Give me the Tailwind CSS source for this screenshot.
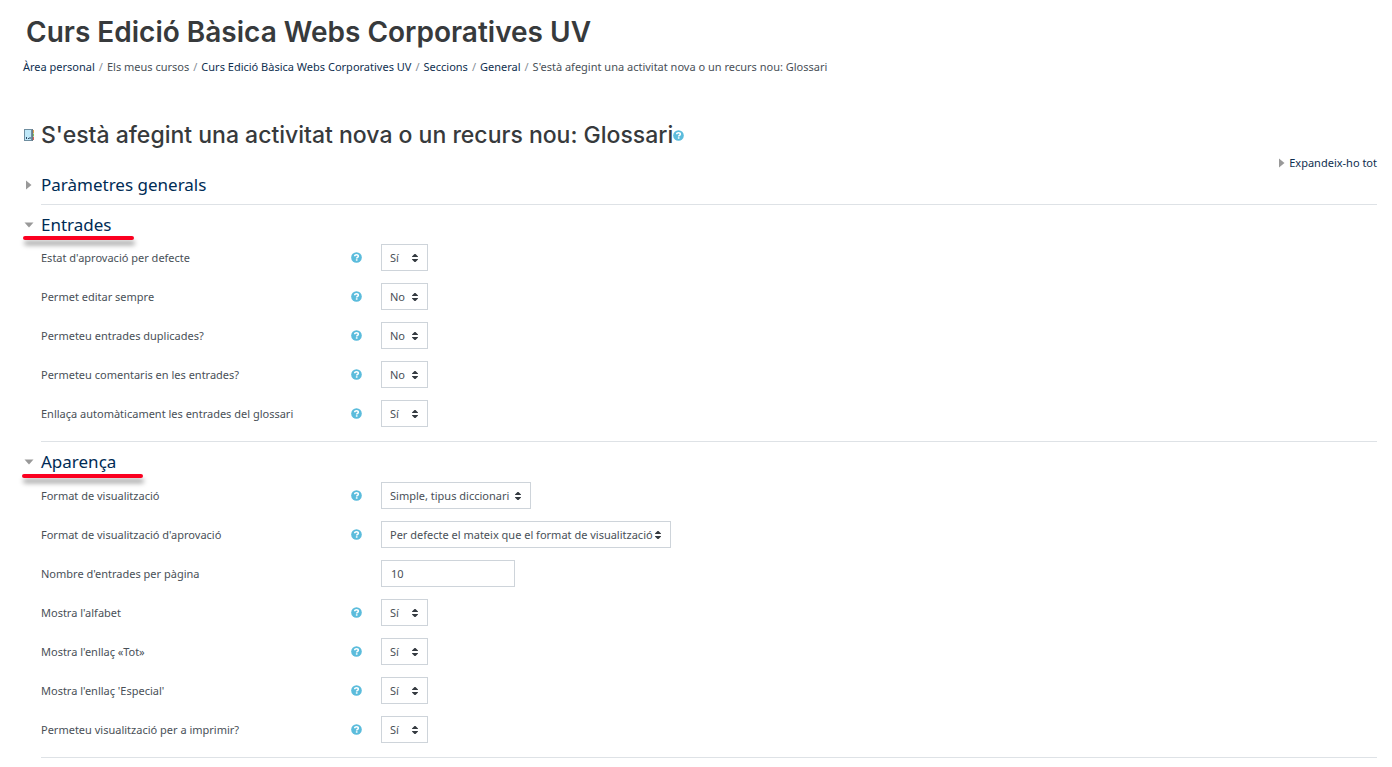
<!DOCTYPE html>
<html lang="ca">
<head>
  <meta charset="UTF-8">
  <meta name="viewport" content="width=device-width, initial-scale=1.0">
  <title>Curs Edició Bàsica Webs Corporatives UV</title>
  <script src="https://cdn.jsdelivr.net/npm/@tailwindcss/browser@4"></script>
</head>
<body class="bg-white text-[#495057] text-[11px] leading-4 font-['Noto_Sans',sans-serif]">
  <!-- Shared icons -->
  <svg class="hidden">
    <symbol id="help" viewBox="0 0 12 12">
      <circle cx="6" cy="6" r="5.800" fill="#5bbcdc"/>
      <path d="M4 4.700C4 3.400 4.900 2.900 6 2.900s2 .7 2 1.700C8 5.900 6.200 5.800 6.200 7.100" fill="none" stroke="#fff" stroke-width="1.700"/>
      <rect x="5.300" y="7.900" width="1.800" height="1.600" fill="#fff"/>
    </symbol>
    <symbol id="updown" viewBox="0 0 6 8">
      <path d="M2.500 0h1L6 2.500V3H0v-.5zM2.500 8h1L6 5.500V5H0v.5z" fill="#343a40"/>
    </symbol>
  </svg>

  <header class="pl-[23px] pr-[15px] pt-[13px]">
    <h1 class="pl-[3px] text-[28px] leading-[38px] font-semibold text-[#373a3c] font-['Inter',sans-serif]">Curs Edició Bàsica Webs Corporatives UV</h1>
    <nav aria-label="Camí de navegació" class="mt-2">
      <ol class="flex flex-wrap gap-x-1">
        <li><a href="#" class="text-[#0f2f4f]">Àrea personal</a></li>
        <li class="text-[#868e96]">/</li>
        <li>Els meus cursos</li>
        <li class="text-[#868e96]">/</li>
        <li><a href="#" class="text-[#0f2f4f]">Curs Edició Bàsica Webs Corporatives UV</a></li>
        <li class="text-[#868e96]">/</li>
        <li><a href="#" class="text-[#0f2f4f]">Seccions</a></li>
        <li class="text-[#868e96]">/</li>
        <li><a href="#" class="text-[#0f2f4f]">General</a></li>
        <li class="text-[#868e96]">/</li>
        <li>S'està afegint una activitat nova o un recurs nou: Glossari</li>
      </ol>
    </nav>
  </header>

  <main class="pl-[23px] pr-[15px] pt-[45px]">
    <div class="flex items-center">
      <svg class="mr-[6px] h-3 w-3" viewBox="0 0 12 12">
        <rect x="1.500" y=".5" width="7" height="11" fill="#bfe8f8" stroke="#6f8ea0"/>
        <path d="M9 0h1v12H9z" fill="#6b7a85"/>
        <path d="M10 1h1v3h-1z" fill="#e0a050"/>
        <path d="M10 4.500h1v3h-1z" fill="#7fbe5e"/>
        <path d="M10 8h1v3h-1z" fill="#d8605b"/>
        <path d="M3 8h1v2H3zM5 9h1v1H5zM6.500 8h1v2h-1z" fill="#2f4a68"/>
      </svg>
      <h2 class="text-[23px] leading-[30px] font-medium text-[#373a3c] font-['Inter',sans-serif]">S'està afegint una activitat nova o un recurs nou: Glossari</h2>
      <button type="button" aria-label="Ajuda"><svg class="h-[11px] w-[11px]"><use href="#help"/></svg></button>
    </div>

    <div class="mt-[5px] flex justify-end">
      <a href="#" class="flex items-center gap-1 text-[#0f2f4f]">
        <svg class="h-[10px] w-[6px]" viewBox="0 0 6 10"><path d="M0 0.500 5.500 5 0 9.500z" fill="#999"/></svg>
        Expandeix-ho tot
      </a>
    </div>

    <form>
      <section class="ml-[18px] border-b border-[#dee2e6] pt-[2px] pb-[7px]">
        <h3 class="-ml-[18px] text-[17px] leading-6">
          <a href="#" class="flex items-center text-[#002b55]">
            <svg class="ml-[3px] mr-[9px] h-[10px] w-[6px]" viewBox="0 0 6 10"><path d="M0 0.500 5.500 5 0 9.500z" fill="#999"/></svg>
            Paràmetres generals
          </a>
        </h3>
      </section>

      <section class="ml-[18px] border-b border-[#dee2e6] pt-2 pb-[14px]">
        <h3 class="relative -ml-[18px] mb-[7px] text-[17px] leading-6">
          <a href="#" class="flex items-center text-[#002b55]">
            <svg class="ml-[1px] mr-[7px] h-[6px] w-[10px]" viewBox="0 0 10 6"><path d="M0.500 0.500h9L5 5.500z" fill="#999"/></svg>
            Entrades
          </a>
          <span class="absolute top-[23px] left-0 h-1 w-[111px] rounded-full bg-[#fb0020] shadow-[1px_5px_5px_rgba(0,0,0,0.4)]"></span>
        </h3>
        <div class="flex flex-col gap-3">
          <div class="flex items-center">
            <div class="flex w-1/4 items-center justify-between pr-[13px]">
              <label for="aprovacio">Estat d'aprovació per defecte</label>
              <button type="button" aria-label="Ajuda"><svg class="h-[11px] w-[11px]"><use href="#help"/></svg></button>
            </div>
            <div class="relative ml-[6px]">
              <select id="aprovacio" class="block h-[27px] w-[47px] appearance-none border border-[#ced4da] bg-white pl-2"><option>Sí</option><option>No</option></select>
              <svg class="pointer-events-none absolute top-[10px] right-[10px] h-2 w-[6px]"><use href="#updown"/></svg>
            </div>
          </div>
          <div class="flex items-center">
            <div class="flex w-1/4 items-center justify-between pr-[13px]">
              <label for="editar">Permet editar sempre</label>
              <button type="button" aria-label="Ajuda"><svg class="h-[11px] w-[11px]"><use href="#help"/></svg></button>
            </div>
            <div class="relative ml-[6px]">
              <select id="editar" class="block h-[27px] w-[47px] appearance-none border border-[#ced4da] bg-white pl-2"><option>No</option><option>Sí</option></select>
              <svg class="pointer-events-none absolute top-[10px] right-[10px] h-2 w-[6px]"><use href="#updown"/></svg>
            </div>
          </div>
          <div class="flex items-center">
            <div class="flex w-1/4 items-center justify-between pr-[13px]">
              <label for="duplicades">Permeteu entrades duplicades?</label>
              <button type="button" aria-label="Ajuda"><svg class="h-[11px] w-[11px]"><use href="#help"/></svg></button>
            </div>
            <div class="relative ml-[6px]">
              <select id="duplicades" class="block h-[27px] w-[47px] appearance-none border border-[#ced4da] bg-white pl-2"><option>No</option><option>Sí</option></select>
              <svg class="pointer-events-none absolute top-[10px] right-[10px] h-2 w-[6px]"><use href="#updown"/></svg>
            </div>
          </div>
          <div class="flex items-center">
            <div class="flex w-1/4 items-center justify-between pr-[13px]">
              <label for="comentaris">Permeteu comentaris en les entrades?</label>
              <button type="button" aria-label="Ajuda"><svg class="h-[11px] w-[11px]"><use href="#help"/></svg></button>
            </div>
            <div class="relative ml-[6px]">
              <select id="comentaris" class="block h-[27px] w-[47px] appearance-none border border-[#ced4da] bg-white pl-2"><option>No</option><option>Sí</option></select>
              <svg class="pointer-events-none absolute top-[10px] right-[10px] h-2 w-[6px]"><use href="#updown"/></svg>
            </div>
          </div>
          <div class="flex items-center">
            <div class="flex w-1/4 items-center justify-between pr-[13px]">
              <label for="enllaca">Enllaça automàticament les entrades del glossari</label>
              <button type="button" aria-label="Ajuda"><svg class="h-[11px] w-[11px]"><use href="#help"/></svg></button>
            </div>
            <div class="relative ml-[6px]">
              <select id="enllaca" class="block h-[27px] w-[47px] appearance-none border border-[#ced4da] bg-white pl-2"><option>Sí</option><option>No</option></select>
              <svg class="pointer-events-none absolute top-[10px] right-[10px] h-2 w-[6px]"><use href="#updown"/></svg>
            </div>
          </div>
        </div>
      </section>

      <section class="ml-[18px] border-b border-[#dee2e6] pt-2 pb-[14px]">
        <h3 class="relative -ml-[18px] mb-2 text-[17px] leading-6">
          <a href="#" class="flex items-center text-[#002b55]">
            <svg class="ml-[1px] mr-[7px] h-[6px] w-[10px]" viewBox="0 0 10 6"><path d="M0.500 0.500h9L5 5.500z" fill="#999"/></svg>
            Aparença
          </a>
          <span class="absolute top-6 -left-px h-1 w-[121px] rounded-full bg-[#fb0020] shadow-[1px_5px_5px_rgba(0,0,0,0.4)]"></span>
        </h3>
        <div class="flex flex-col gap-3">
          <div class="flex items-center">
            <div class="flex w-1/4 items-center justify-between pr-[13px]">
              <label for="format">Format de visualització</label>
              <button type="button" aria-label="Ajuda"><svg class="h-[11px] w-[11px]"><use href="#help"/></svg></button>
            </div>
            <div class="relative ml-[6px]">
              <select id="format" class="block h-[27px] w-[150px] appearance-none border border-[#ced4da] bg-white pl-2"><option>Simple, tipus diccionari</option></select>
              <svg class="pointer-events-none absolute top-[10px] right-[10px] h-2 w-[6px]"><use href="#updown"/></svg>
            </div>
          </div>
          <div class="flex items-center">
            <div class="flex w-1/4 items-center justify-between pr-[13px]">
              <label for="formataprovacio">Format de visualització d'aprovació</label>
              <button type="button" aria-label="Ajuda"><svg class="h-[11px] w-[11px]"><use href="#help"/></svg></button>
            </div>
            <div class="relative ml-[6px]">
              <select id="formataprovacio" class="block h-[27px] w-[290px] appearance-none border border-[#ced4da] bg-white pl-2"><option>Per defecte el mateix que el format de visualització</option></select>
              <svg class="pointer-events-none absolute top-[10px] right-[10px] h-2 w-[6px]"><use href="#updown"/></svg>
            </div>
          </div>
          <div class="flex items-center">
            <div class="flex w-1/4 items-center justify-between pr-[13px]">
              <label for="nombre">Nombre d'entrades per pàgina</label>
            </div>
            <div class="ml-[6px]">
              <input id="nombre" type="text" value="10" class="block h-[27px] w-[134px] border border-[#ced4da] bg-white pl-[9px]">
            </div>
          </div>
          <div class="flex items-center">
            <div class="flex w-1/4 items-center justify-between pr-[13px]">
              <label for="alfabet">Mostra l'alfabet</label>
              <button type="button" aria-label="Ajuda"><svg class="h-[11px] w-[11px]"><use href="#help"/></svg></button>
            </div>
            <div class="relative ml-[6px]">
              <select id="alfabet" class="block h-[27px] w-[47px] appearance-none border border-[#ced4da] bg-white pl-2"><option>Sí</option><option>No</option></select>
              <svg class="pointer-events-none absolute top-[10px] right-[10px] h-2 w-[6px]"><use href="#updown"/></svg>
            </div>
          </div>
          <div class="flex items-center">
            <div class="flex w-1/4 items-center justify-between pr-[13px]">
              <label for="tot">Mostra l'enllaç «Tot»</label>
              <button type="button" aria-label="Ajuda"><svg class="h-[11px] w-[11px]"><use href="#help"/></svg></button>
            </div>
            <div class="relative ml-[6px]">
              <select id="tot" class="block h-[27px] w-[47px] appearance-none border border-[#ced4da] bg-white pl-2"><option>Sí</option><option>No</option></select>
              <svg class="pointer-events-none absolute top-[10px] right-[10px] h-2 w-[6px]"><use href="#updown"/></svg>
            </div>
          </div>
          <div class="flex items-center">
            <div class="flex w-1/4 items-center justify-between pr-[13px]">
              <label for="especial">Mostra l'enllaç 'Especial'</label>
              <button type="button" aria-label="Ajuda"><svg class="h-[11px] w-[11px]"><use href="#help"/></svg></button>
            </div>
            <div class="relative ml-[6px]">
              <select id="especial" class="block h-[27px] w-[47px] appearance-none border border-[#ced4da] bg-white pl-2"><option>Sí</option><option>No</option></select>
              <svg class="pointer-events-none absolute top-[10px] right-[10px] h-2 w-[6px]"><use href="#updown"/></svg>
            </div>
          </div>
          <div class="flex items-center">
            <div class="flex w-1/4 items-center justify-between pr-[13px]">
              <label for="imprimir">Permeteu visualització per a imprimir?</label>
              <button type="button" aria-label="Ajuda"><svg class="h-[11px] w-[11px]"><use href="#help"/></svg></button>
            </div>
            <div class="relative ml-[6px]">
              <select id="imprimir" class="block h-[27px] w-[47px] appearance-none border border-[#ced4da] bg-white pl-2"><option>Sí</option><option>No</option></select>
              <svg class="pointer-events-none absolute top-[10px] right-[10px] h-2 w-[6px]"><use href="#updown"/></svg>
            </div>
          </div>
        </div>
      </section>
    </form>
  </main>
</body>
</html>
